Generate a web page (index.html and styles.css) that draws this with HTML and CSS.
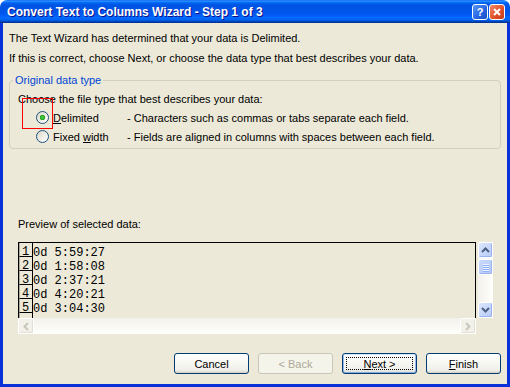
FILE: index.html
```html
<!DOCTYPE html>
<html lang="en">
<head>
  <meta charset="UTF-8">
  <meta name="viewport" content="width=device-width, initial-scale=1.0">
  <title>Convert Text to Columns Wizard - Step 1 of 3</title>
  <link rel="stylesheet" href="styles.css">
</head>
<body>
  <div class="window">
    <div class="titlebar">
      <span class="title">Convert Text to Columns Wizard - Step 1 of 3</span>
      <div class="caption">
        <span class="cap-btn help">?</span>
        <span class="cap-btn close">
          <svg width="8" height="8" viewBox="0 0 8 8"><path d="M1 1L7 7M7 1L1 7" stroke="#fff" stroke-width="2"/></svg>
        </span>
      </div>
    </div>

    <div class="content">
      <p class="intro">The Text Wizard has determined that your data is Delimited.</p>
      <p class="intro second">If this is correct, choose Next, or choose the data type that best describes your data.</p>

      <fieldset class="group">
        <legend>Original data type</legend>
        <div class="choices">
          <div class="choose">Choose the file type that best describes your data:</div>
          <div class="option">
            <span class="radio checked"></span>
            <span class="opt-name"><u>D</u>elimited</span>
            <span class="opt-desc">- Characters such as commas or tabs separate each field.</span>
          </div>
          <div class="option">
            <span class="radio"></span>
            <span class="opt-name">Fixed <u>w</u>idth</span>
            <span class="opt-desc">- Fields are aligned in columns with spaces between each field.</span>
          </div>
          <div class="marker"></div>
        </div>
      </fieldset>

      <div class="preview-label">Preview of selected data:</div>
      <div class="preview">
        <div class="preview-top">
          <div class="grid">
            <div class="nums">
              <div class="num">1</div>
              <div class="num">2</div>
              <div class="num">3</div>
              <div class="num">4</div>
              <div class="num">5</div>
              <div class="num"></div>
            </div>
            <div class="data">
              <div class="line">0d 5:59:27</div>
              <div class="line">0d 1:58:08</div>
              <div class="line">0d 2:37:21</div>
              <div class="line">0d 4:20:21</div>
              <div class="line">0d 3:04:30</div>
            </div>
          </div>
          <div class="vscroll">
            <span class="sb-btn">
              <svg width="9" height="6" viewBox="0 0 9 6"><path d="M1 5L4.5 1.5L8 5" fill="none" stroke="#4d6185" stroke-width="2"/></svg>
            </span>
            <span class="sb-thumb">
              <span class="grip"></span><span class="grip"></span><span class="grip"></span><span class="grip"></span>
            </span>
            <span class="sb-fill"></span>
            <span class="sb-btn">
              <svg width="9" height="6" viewBox="0 0 9 6"><path d="M1 1L4.5 4.5L8 1" fill="none" stroke="#4d6185" stroke-width="2"/></svg>
            </span>
          </div>
        </div>
        <div class="hscroll">
          <span class="sb-btn off">
            <svg width="6" height="9" viewBox="0 0 6 9"><path d="M5 1L1.5 4.5L5 8" fill="none" stroke="#c9c7ba" stroke-width="2"/></svg>
          </span>
          <span class="sb-btn off">
            <svg width="6" height="9" viewBox="0 0 6 9"><path d="M1 1L4.5 4.5L1 8" fill="none" stroke="#c9c7ba" stroke-width="2"/></svg>
          </span>
        </div>
      </div>

      <div class="buttons">
        <button class="btn">Cancel</button>
        <button class="btn" disabled>&lt; Back</button>
        <button class="btn default"><span class="focus"><u>N</u>ext &gt;</span></button>
        <button class="btn"><u>F</u>inish</button>
      </div>
    </div>
  </div>
</body>
</html>
```

FILE: styles.css
```css
body {
  margin: 0;
  background-color: #fff;
  color: #000;
  font-family: "Liberation Sans", Arial, sans-serif;
  font-size: 11px;
}
.window {
  width: 510px;
  height: 387px;
  display: flex;
  flex-direction: column;
}
.titlebar {
  flex: none;
  height: 23px;
  display: flex;
  align-items: center;
  justify-content: space-between;
  padding: 0 5px 0 7px;
  border-radius: 7px 7px 0 0;
  background: linear-gradient(to bottom, #0058ee 0%, #3593ff 4%, #288eff 6%, #127dff 8%, #036ffc 10%, #0262ee 14%, #0057e5 20%, #0054e3 24%, #0055eb 56%, #005bf5 66%, #026afe 76%, #0062ef 86%, #0052d6 92%, #0040ab 94%, #003092 100%);
}
.title {
  color: #fff;
  font-weight: bold;
  font-size: 12px;
  text-shadow: 1px 1px #0f1089;
}
.caption {
  display: flex;
  gap: 1px;
}
.cap-btn {
  width: 16px;
  height: 16px;
  box-sizing: border-box;
  border: 1px solid #fff;
  border-radius: 3px;
  display: flex;
  align-items: center;
  justify-content: center;
  color: #fff;
  font-weight: bold;
  font-size: 11px;
}
.help {
  background: linear-gradient(135deg, #5a98f7, #2663e0 60%, #1c4fc4);
}
.close {
  background: linear-gradient(135deg, #f08a6a, #e2522c 55%, #c33b19);
}
.content {
  flex: 1;
  background-color: #ece9d8;
  border: 3px solid #0831d9;
  border-top: 0;
  padding: 9px 6px 0;
}
.intro {
  margin: 0;
  line-height: 13px;
}
.intro.second {
  margin-top: 7px;
}
.group {
  margin: 9px 0 0;
  padding: 0 8px 2px;
  border: 1px solid #d0d0bf;
  border-radius: 4px;
  min-width: 0;
}
.group legend {
  color: #0046d5;
  line-height: 13px;
  padding: 0 2px;
  margin-left: -5px;
}
.choices {
  position: relative;
  padding-top: 6px;
}
.choose {
  line-height: 13px;
  margin-bottom: 2px;
}
.option {
  height: 19px;
  display: flex;
  align-items: center;
  padding-left: 18px;
}
.radio {
  width: 13px;
  height: 13px;
  box-sizing: border-box;
  border: 1px solid #1c5180;
  border-radius: 50%;
  background: linear-gradient(135deg, #dcd9c9, #fff);
  margin-right: 4px;
}
.radio.checked {
  background: radial-gradient(circle, #55d451 0, #21a121 2.5px, transparent 3px), linear-gradient(135deg, #dcd9c9, #fff);
}
.opt-name {
  width: 74px;
}
.marker {
  position: absolute;
  left: 4px;
  top: 11px;
  width: 31px;
  height: 31px;
  box-sizing: border-box;
  border: 1px solid #f00;
}
.preview-label {
  margin: 69px 0 0 9px;
  line-height: 13px;
}
.preview {
  margin: 11px 0 0 9px;
  width: 475px;
}
.preview-top {
  display: flex;
  gap: 2px;
  height: 76px;
}
.grid {
  flex: 1;
  display: flex;
  overflow: hidden;
  border: 1px solid #000;
  border-bottom: 0;
  font-family: "Liberation Mono", "Courier New", monospace;
  font-size: 12px;
}
.nums {
  width: 13px;
  border-right: 1px solid #000;
}
.num {
  height: 14px;
  box-sizing: border-box;
  padding: 3px 0 0 2px;
  line-height: 12px;
  border-left: 1px solid #aca899;
  border-bottom: 1px solid #000;
}
.data {
  padding-top: 3px;
}
.line {
  height: 14px;
  line-height: 14px;
  white-space: pre;
}
.vscroll {
  width: 15px;
  display: flex;
  flex-direction: column;
  background: linear-gradient(to right, #f3f1ec, #fefefb);
}
.sb-btn {
  flex: none;
  width: 15px;
  height: 16px;
  box-sizing: border-box;
  border: 1px solid #fff;
  border-radius: 2px;
  display: flex;
  align-items: center;
  justify-content: center;
  background: linear-gradient(135deg, #dce6fd, #b6cbf8);
  box-shadow: inset -1px -1px #9ab3ee;
}
.sb-btn.off {
  width: 16px;
  background: #f2f1ea;
  box-shadow: inset -1px -1px #e2e0d6;
}
.sb-thumb {
  flex: none;
  height: 16px;
  margin-top: 1px;
  box-sizing: border-box;
  border: 1px solid #fff;
  border-radius: 2px;
  background: linear-gradient(135deg, #c9d8fc, #b4c8f6);
  box-shadow: inset -1px -1px #9ab3ee;
  display: flex;
  flex-direction: column;
  align-items: center;
  justify-content: center;
  gap: 1px;
}
.grip {
  width: 6px;
  height: 1px;
  background-color: #eef4fe;
  box-shadow: 0 1px #8cb0f8;
}
.sb-fill {
  flex: 1;
}
.hscroll {
  height: 16px;
  width: 458px;
  display: flex;
  justify-content: space-between;
  background: linear-gradient(to bottom, #f3f1ec, #fefefb);
}
.buttons {
  display: flex;
  justify-content: flex-end;
  gap: 9px;
  margin-top: 19px;
}
.btn {
  width: 75px;
  height: 21px;
  padding: 0;
  border: 1px solid #003c74;
  border-radius: 3px;
  background: linear-gradient(to bottom, #fff, #f0f0ea 85%, #d6d0c5);
  font-family: "Liberation Sans", Arial, sans-serif;
  font-size: 11px;
  color: #000;
}
.btn:disabled {
  border-color: #c9c7ba;
  background: #f5f4ea;
  color: #aca899;
}
.btn.default {
  box-shadow: inset 0 -1px #89ade4, inset 0 1px #cee7ff, inset 1px 0 #98b8ea, inset -1px 0 #98b8ea;
  padding: 3px;
}
.focus {
  display: flex;
  align-items: center;
  justify-content: center;
  height: 100%;
  box-sizing: border-box;
  border: 1px dotted #000;
}
```
